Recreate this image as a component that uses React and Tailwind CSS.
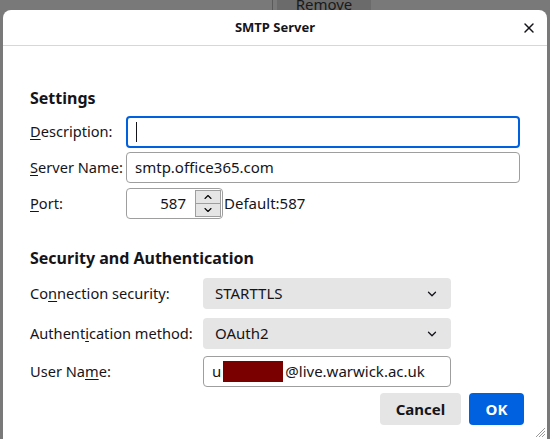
import { ChevronDown, ChevronUp, X } from "lucide-react";

const font = { fontFamily: '"Noto Sans", "Open Sans", sans-serif' };

const Label = ({ children, w, u }) => {
  // underline the access-key letter
  const i = children.indexOf(u);
  return (
    <span className={`${w} shrink-0 text-[14.6px] text-[#15141a]`}>
      {children.slice(0, i)}
      <span className="underline underline-offset-2">{children[i]}</span>
      {children.slice(i + 1)}
    </span>
  );
};

const Select = ({ value }) => (
  <div className="flex h-[31px] w-[248px] items-center justify-between rounded-[4px] bg-[#e5e5e5] pl-[12px] pr-[12px] text-[15px] text-[#15141a]">
    <span>{value}</span>
    <ChevronDown size={14} strokeWidth={2.2} />
  </div>
);

export default function App() {
  return (
    <div className="h-[439px] w-[550px] overflow-hidden bg-[#797979]" style={font}>
      {/* page behind the dialog */}
      <div className="flex h-[10px] overflow-hidden">
        <div className="ml-[272px] h-full w-px bg-[#5a5a5a]" />
        <div className="ml-[4px] flex h-full w-[94px] items-end justify-center bg-[#6b6b6b]">
          <span className="-mb-[2px] text-[15px] leading-none text-[#1a1a1a]">Remove</span>
        </div>
      </div>

      <div className="relative mx-[3px] h-[429px] rounded-t-[8px] bg-white">
        <div className="relative flex h-[36px] items-center justify-center border-b border-[#d7d7db]">
          <span className="text-[13px] font-bold text-[#15141a]">SMTP Server</span>
          <X size={16} strokeWidth={2.2} className="absolute right-[10px] top-[10px] text-[#15141a]" />
        </div>

        <div className="px-[27px]">
          <h2 className="mt-[44px] text-[16px] font-bold leading-none text-[#15141a]">Settings</h2>

          <div className="mt-[10px] flex items-center">
            <Label w="w-[96px]" u="D">Description:</Label>
            <div className="flex h-[32px] flex-1 items-center rounded-[4px] border-2 border-[#0061e0] px-[8px]">
              <div className="h-[20px] w-px bg-[#15141a]" />
            </div>
          </div>

          <div className="mt-[4px] flex items-center">
            <Label w="w-[96px]" u="S">Server Name:</Label>
            <div className="flex h-[31px] flex-1 items-center rounded-[4px] border border-[#9e9e9e] px-[8px] text-[15px] text-[#15141a]">
              smtp.office365.com
            </div>
          </div>

          <div className="mt-[5px] flex items-center">
            <Label w="w-[96px]" u="P">Port:</Label>
            <div className="flex h-[31px] w-[97px] items-center rounded-[4px] border border-[#9e9e9e] pr-[1px]">
              <span className="flex-1 pr-[9px] text-right text-[15px] text-[#15141a]">587</span>
              <div className="flex h-[27px] w-[26px] flex-col border border-[#9e9e9e] bg-[#e5e5e5]">
                <div className="flex flex-1 items-center justify-center border-b border-[#9e9e9e]">
                  <ChevronUp size={12} strokeWidth={2.2} />
                </div>
                <div className="flex flex-1 items-center justify-center">
                  <ChevronDown size={12} strokeWidth={2.2} />
                </div>
              </div>
            </div>
            <span className="ml-[1px] text-[15px] text-[#15141a]">Default:587</span>
          </div>

          <h2 className="mt-[31px] text-[16px] font-bold leading-none text-[#15141a]">Security and Authentication</h2>

          <div className="mt-[12px] flex items-center">
            <Label w="w-[173px]" u="n">Connection security:</Label>
            <Select value="STARTTLS" />
          </div>

          <div className="mt-[9px] flex items-center">
            <Label w="w-[173px]" u="i">Authentication method:</Label>
            <Select value="OAuth2" />
          </div>

          <div className="mt-[7px] flex items-center">
            <Label w="w-[173px]" u="m">User Name:</Label>
            <div className="flex h-[31px] w-[248px] items-center rounded-[4px] border border-[#9e9e9e] pl-[8px] text-[15px] text-[#15141a]">
              <span>u</span>
              <span className="mx-[2px] h-[21px] w-[60px] bg-[#7a0000]" />
              <span>@live.warwick.ac.uk</span>
            </div>
          </div>

          <div className="mt-[6px] flex justify-end gap-[8px]">
            <button className="h-[32px] w-[81px] rounded-[4px] bg-[#e5e5e5] text-[15px] font-bold text-[#15141a]">
              Cancel
            </button>
            <button className="mr-[-4px] h-[32px] w-[55px] rounded-[4px] bg-[#0061e0] text-[15px] font-bold text-white">
              OK
            </button>
          </div>
        </div>

        {/* resize grip */}
        <svg className="absolute bottom-[1px] right-[1px]" width="11" height="11" viewBox="0 0 11 11">
          <path d="M10 1 L1 10 M10 4 L4 10 M10 7 L7 10" stroke="#9a9a9a" strokeWidth="1" />
        </svg>
      </div>
    </div>
  );
}
